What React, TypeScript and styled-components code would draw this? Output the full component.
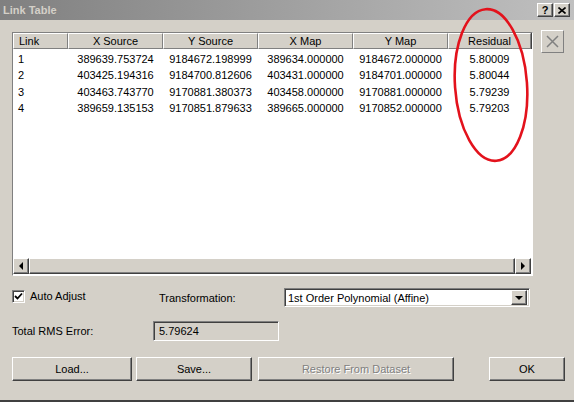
import { createGlobalStyle, styled } from 'styled-components';

const GlobalStyle = createGlobalStyle`
  html, body {
    margin: 0;
    padding: 0;
    background: #d4d0c8;
  }
  body {
    font-family: "Liberation Sans", Arial, sans-serif;
    font-size: 11px;
    color: #000;
  }
`;

interface Link {
  id: number;
  xSource: string;
  ySource: string;
  xMap: string;
  yMap: string;
  residual: string;
}

const links: Link[] = [
  { id: 1, xSource: '389639.753724', ySource: '9184672.198999', xMap: '389634.000000', yMap: '9184672.000000', residual: '5.80009' },
  { id: 2, xSource: '403425.194316', ySource: '9184700.812606', xMap: '403431.000000', yMap: '9184701.000000', residual: '5.80044' },
  { id: 3, xSource: '403463.743770', ySource: '9170881.380373', xMap: '403458.000000', yMap: '9170881.000000', residual: '5.79239' },
  { id: 4, xSource: '389659.135153', ySource: '9170851.879633', xMap: '389665.000000', yMap: '9170852.000000', residual: '5.79203' },
];

const columns = [
  { key: 'link', title: 'Link', width: 55, align: 'left' },
  { key: 'xSource', title: 'X Source', width: 95, align: 'center' },
  { key: 'ySource', title: 'Y Source', width: 95, align: 'center' },
  { key: 'xMap', title: 'X Map', width: 95, align: 'center' },
  { key: 'yMap', title: 'Y Map', width: 95, align: 'center' },
  { key: 'residual', title: 'Residual', width: 83, align: 'center' },
];

const Window = styled.div`
  position: relative;
  width: 574px;
  height: 402px;
  background: #d4d0c8;
  display: flex;
  flex-direction: column;
  overflow: hidden;
  border-bottom: 2px solid #404040;
  box-sizing: border-box;
`;

const TitleBar = styled.div`
  height: 20px;
  display: flex;
  align-items: center;
  justify-content: space-between;
  padding: 0 4px 0 3px;
  background: linear-gradient(to right, #808080, #c0c0c0);

  > .title {
    font-weight: bold;
    font-size: 11px;
    color: #d4d0c8;
  }
`;

const CaptionButtons = styled.div`
  display: flex;
  gap: 1px;
`;

const CaptionButton = styled.div`
  width: 16px;
  height: 14px;
  box-sizing: border-box;
  background: #d4d0c8;
  border-top: 1px solid #fff;
  border-left: 1px solid #fff;
  border-right: 1px solid #404040;
  border-bottom: 1px solid #404040;
  box-shadow: inset -1px -1px 0 #808080;
  display: flex;
  align-items: center;
  justify-content: center;
  font-weight: bold;
  font-size: 11px;
  line-height: 1;
`;

const Body = styled.div`
  display: flex;
  flex-direction: column;
  padding: 12px 0 0 12px;
`;

const TopRow = styled.div`
  display: flex;
  align-items: flex-start;
  gap: 8px;
`;

const ListBox = styled.div`
  width: 521px;
  height: 244px;
  box-sizing: border-box;
  border-top: 1px solid #808080;
  border-left: 1px solid #808080;
  border-right: 1px solid #fff;
  border-bottom: 1px solid #fff;
  background: #fff;
  display: flex;
  flex-direction: column;
`;

const HeaderRow = styled.div`
  display: flex;
  height: 16px;
`;

const HeaderCell = styled.div<{ $w: number; $align: string }>`
  width: ${(p) => p.$w}px;
  box-sizing: border-box;
  background: #d4d0c8;
  border-top: 1px solid #fff;
  border-left: 1px solid #fff;
  border-right: 1px solid #808080;
  border-bottom: 1px solid #808080;
  box-shadow: 1px 0 0 #404040;
  text-align: ${(p) => (p.$align === 'left' ? 'left' : 'center')};
  padding-left: ${(p) => (p.$align === 'left' ? '5px' : '0')};
  line-height: 15px;
`;

const Rows = styled.div`
  flex: 1;
  padding-top: 2px;
`;

const Row = styled.div`
  display: flex;
  height: 16.4px;
  line-height: 16px;
`;

const Cell = styled.div<{ $w: number; $align: string }>`
  width: ${(p) => p.$w}px;
  text-align: ${(p) => (p.$align === 'left' ? 'left' : 'center')};
  padding-left: ${(p) => (p.$align === 'left' ? '5px' : '0')};
  box-sizing: border-box;
`;

const ScrollBar = styled.div`
  display: flex;
  height: 16px;
  margin: 0 1px 1px 0;
  background: #ece9e2;
`;

const ScrollArrow = styled.div`
  width: 16px;
  height: 16px;
  box-sizing: border-box;
  background: #d4d0c8;
  border-top: 1px solid #fff;
  border-left: 1px solid #fff;
  border-right: 1px solid #404040;
  border-bottom: 1px solid #404040;
  box-shadow: inset -1px -1px 0 #808080;
  display: flex;
  align-items: center;
  justify-content: center;
`;

const ScrollThumb = styled(ScrollArrow)`
  flex: 1;
`;

const SideClose = styled.div`
  width: 23px;
  height: 23px;
  box-sizing: border-box;
  margin-top: -2px;
  border-top: 1px solid #fff;
  border-left: 1px solid #fff;
  border-right: 1px solid #808080;
  border-bottom: 1px solid #808080;
  display: flex;
  align-items: center;
  justify-content: center;
`;

const OptionsRow = styled.div`
  display: flex;
  align-items: center;
  margin-top: 12px;
  height: 19px;
`;

const CheckGroup = styled.label`
  width: 147px;
  display: flex;
  align-items: center;
  gap: 5px;
  margin-top: -3px;
`;

const CheckBox = styled.div`
  width: 13px;
  height: 13px;
  box-sizing: border-box;
  background: #fff;
  border-top: 1px solid #808080;
  border-left: 1px solid #808080;
  border-right: 1px solid #fff;
  border-bottom: 1px solid #fff;
  box-shadow: inset 1px 1px 0 #404040, inset -1px -1px 0 #d4d0c8;
  display: flex;
  align-items: center;
  justify-content: center;
`;

const FieldLabel = styled.div<{ $w: number }>`
  width: ${(p) => p.$w}px;
`;

const Combo = styled.div`
  width: 246px;
  height: 19px;
  box-sizing: border-box;
  background: #fff;
  border-top: 1px solid #808080;
  border-left: 1px solid #808080;
  border-right: 1px solid #fff;
  border-bottom: 1px solid #fff;
  box-shadow: inset 1px 1px 0 #404040, inset -1px -1px 0 #d4d0c8;
  display: flex;
  align-items: center;
  padding: 2px 2px 2px 3px;

  > .value {
    flex: 1;
  }
`;

const ComboButton = styled(ScrollArrow)`
  width: 16px;
  height: 15px;
`;

const RmsRow = styled.div`
  display: flex;
  align-items: center;
  margin-top: 14px;
  height: 20px;
`;

const ReadOnlyBox = styled.div`
  width: 126px;
  height: 20px;
  box-sizing: border-box;
  background: #d4d0c8;
  border-top: 1px solid #808080;
  border-left: 1px solid #808080;
  border-right: 1px solid #fff;
  border-bottom: 1px solid #fff;
  box-shadow: inset 1px 1px 0 #404040;
  padding-left: 5px;
  line-height: 18px;
`;

const ButtonRow = styled.div`
  display: flex;
  margin-top: 16px;
`;

const Button = styled.button<{ $w: number; $gap: number; $disabled?: boolean }>`
  width: ${(p) => p.$w}px;
  height: 24px;
  margin-right: ${(p) => p.$gap}px;
  box-sizing: border-box;
  padding: 0;
  font-family: inherit;
  font-size: 11px;
  background: #d4d0c8;
  border-top: 1px solid #fff;
  border-left: 1px solid #fff;
  border-right: 1px solid #404040;
  border-bottom: 1px solid #404040;
  box-shadow: inset -1px -1px 0 #808080;
  color: ${(p) => (p.$disabled ? '#808080' : '#000')};
  text-shadow: ${(p) => (p.$disabled ? '1px 1px 0 #fff' : 'none')};
`;

const Annotation = styled.svg`
  position: absolute;
  left: 0;
  top: 0;
  pointer-events: none;
`;

function Triangle({ dir }: { dir: 'left' | 'right' | 'down' }) {
  const pts =
    dir === 'left' ? '5,0 5,8 1,4' : dir === 'right' ? '1,0 1,8 5,4' : '0,2 8,2 4,6';
  return (
    <svg width={dir === 'down' ? 8 : 6} height={8} viewBox={dir === 'down' ? '0 0 8 8' : '0 0 6 8'}>
      <polygon points={pts} fill="#000" />
    </svg>
  );
}

export default function App() {
  return (
    <Window>
      <GlobalStyle />
      <TitleBar>
        <span className="title">Link Table</span>
        <CaptionButtons>
          <CaptionButton>?</CaptionButton>
          <CaptionButton>
            <svg width="8" height="7" viewBox="0 0 8 7">
              <path d="M0.5 0.5 L7.5 6.5 M7.5 0.5 L0.5 6.5" stroke="#000" strokeWidth="1.6" />
            </svg>
          </CaptionButton>
        </CaptionButtons>
      </TitleBar>

      <Body>
        <TopRow>
          <ListBox>
            <HeaderRow>
              {columns.map((c) => (
                <HeaderCell key={c.key} $w={c.width} $align={c.align}>
                  {c.title}
                </HeaderCell>
              ))}
            </HeaderRow>
            <Rows>
              {links.map((l) => (
                <Row key={l.id}>
                  <Cell $w={55} $align="left">{l.id}</Cell>
                  <Cell $w={95} $align="center">{l.xSource}</Cell>
                  <Cell $w={95} $align="center">{l.ySource}</Cell>
                  <Cell $w={95} $align="center">{l.xMap}</Cell>
                  <Cell $w={95} $align="center">{l.yMap}</Cell>
                  <Cell $w={83} $align="center">{l.residual}</Cell>
                </Row>
              ))}
            </Rows>
            <ScrollBar>
              <ScrollArrow>
                <Triangle dir="left" />
              </ScrollArrow>
              <ScrollThumb />
              <ScrollArrow>
                <Triangle dir="right" />
              </ScrollArrow>
            </ScrollBar>
          </ListBox>
          <SideClose>
            <svg width="13" height="13" viewBox="0 0 13 13">
              <path d="M1 1 L12 12 M12 1 L1 12" stroke="#808080" strokeWidth="1.5" />
            </svg>
          </SideClose>
        </TopRow>

        <OptionsRow>
          <CheckGroup>
            <CheckBox>
              <svg width="9" height="9" viewBox="0 0 9 9">
                <path d="M1 4 L3.5 6.5 L8 1.5" stroke="#000" strokeWidth="1.8" fill="none" />
              </svg>
            </CheckBox>
            Auto Adjust
          </CheckGroup>
          <FieldLabel $w={125}>Transformation:</FieldLabel>
          <Combo>
            <span className="value">1st Order Polynomial (Affine)</span>
            <ComboButton>
              <Triangle dir="down" />
            </ComboButton>
          </Combo>
        </OptionsRow>

        <RmsRow>
          <FieldLabel $w={141}>Total RMS Error:</FieldLabel>
          <ReadOnlyBox>5.79624</ReadOnlyBox>
        </RmsRow>

        <ButtonRow>
          <Button $w={120} $gap={4}>Load...</Button>
          <Button $w={116} $gap={6}>Save...</Button>
          <Button $w={196} $gap={35} $disabled>Restore From Dataset</Button>
          <Button $w={76} $gap={0}>OK</Button>
        </ButtonRow>
      </Body>

      <Annotation width="574" height="402" viewBox="0 0 574 402">
        <ellipse
          cx="491"
          cy="85"
          rx="36"
          ry="76"
          transform="rotate(-4 491 85)"
          fill="none"
          stroke="#e3121c"
          strokeWidth="2.6"
        />
      </Annotation>
    </Window>
  );
}
